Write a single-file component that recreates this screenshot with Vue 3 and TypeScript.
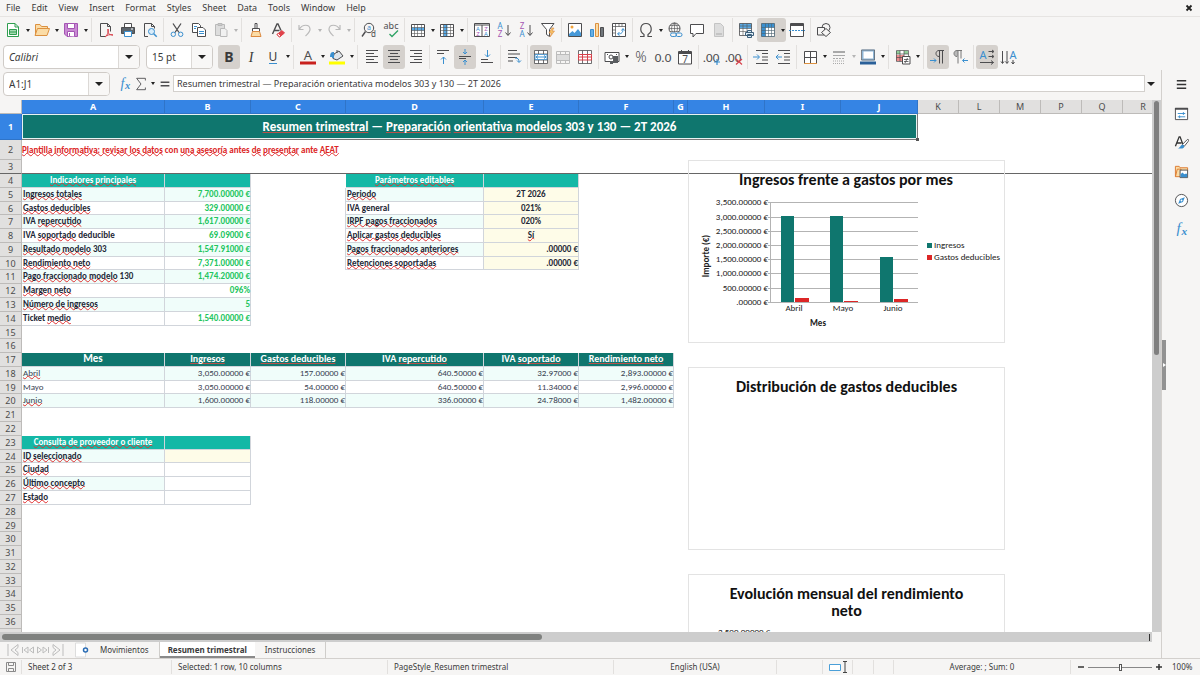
<script setup lang="ts">
import { ref } from 'vue'

type Tool = { id: string; label: string; menu?: boolean; on?: boolean; off?: boolean }
type Cell = { text?: string; cls?: string }
type Row = { n: number; size: string; cells: Cell[] }

const menus = ['File', 'Edit', 'View', 'Insert', 'Format', 'Styles', 'Sheet', 'Data', 'Tools', 'Window', 'Help']

const ink = '#4d4d4f'
const blue = '#3a8fcf'
const lines = (ys: number[], x1: number, x2: number, c = ink) =>
  ys.map((y) => `<path d="M${x1} ${y}H${x2}" stroke="${c}"/>`).join('')
const glyph = (t: string, x: number, y: number, s: number, c: string, extra = '') =>
  `<text x="${x}" y="${y}" font-size="${s}" fill="${c}" stroke="none" text-anchor="middle" ${extra}>${t}</text>`
const grid = (accent: string) =>
  `<path d="M1.500 2.500h13v12h-13z" fill="#fff"/><path d="${accent}" fill="#58aae6"/><path d="M1.500 5.500h13M1.500 8.500h13M1.500 11.500h13M4.500 2.500v12M7.500 2.500v12M11.500 2.500v12" stroke="#555" stroke-width=".6"/><path d="M1.500 2.500h13v12h-13z" stroke="${ink}"/>`

const icons: Record<string, string> = {
  new: `<path d="M2.500 1.500h7.500l3.500 3.500v9.500h-11z" fill="#fff" stroke="#2f9e4f"/><path d="M10 1.500v3.500h3.500" stroke="#2f9e4f"/><path d="M4.500 7.500h7v5h-7z" fill="#a5dbb3" stroke="#2f9e4f"/><path d="M4.500 10h7" stroke="#2f9e4f"/>`,
  open: `<path d="M1.500 13.500v-11h4.500l1.500 2h6v2" fill="#fbdca6" stroke="#dc9140"/><path d="M1 13.500l2.500-7h12l-2.500 7z" fill="#fbdca6" stroke="#dc9140"/>`,
  save: `<path d="M1.500 1.500h13v13h-10.500l-2.500-2.500z" fill="#c98ad3" stroke="#a455b3"/><path d="M4.500 1.500h7v5h-7z" fill="#fff" stroke="#a455b3"/><path d="M4.500 14v-4.500h7v5" fill="#fff" stroke="#a455b3"/><path d="M6.500 11v3" stroke="#a455b3"/>`,
  pdf: `<path d="M2.500 1.500h7l3 3v5M7 14.500h-4.500v-13M9.500 1.500v3h3" stroke="${ink}"/><path d="M7 15c3-3 4-5 3-8-1 4 1 6 5 6-3-1-6 0-8 2z" stroke="#d8404a"/>`,
  print: `<path d="M4.500 5v-3.500h7v3.500" fill="#fff" stroke="${ink}"/><path d="M1.500 5.500h13v6h-13z" fill="#5c646b" stroke="${ink}"/><path d="M4.500 9.500h7v5h-7z" fill="#fff" stroke="${blue}"/><path d="M11 7h2" stroke="#fff"/>`,
  preview: `<path d="M6 14.500h-3.500v-13h7l3 3v2M9.500 1.500v3h3" stroke="${ink}"/><circle cx="9.500" cy="9.500" r="3" fill="#d9ecfa" stroke="${blue}"/><path d="M11.700 11.700l3 3" stroke="${blue}" stroke-width="1.500"/>`,
  cut: `<path d="M4 1.500l6 9M12 1.500l-6 9" stroke="${ink}" stroke-width="1.300"/><circle cx="4.300" cy="12.300" r="2.200" stroke="${blue}"/><circle cx="11.700" cy="12.300" r="2.200" stroke="${blue}"/>`,
  copy: `<path d="M1.500 1.500h6l2 2v7h-8z" fill="#fff" stroke="${ink}"/><path d="M6.500 5.500h5.500l2.500 2.500v6.500h-8z" fill="#fff" stroke="${ink}"/><path d="M3 4.500h3M3 6.500h2" stroke="${blue}"/><path d="M8 9.500h5M8 11.500h5" stroke="${blue}"/>`,
  paste: `<path d="M2.500 2.500h9v11h-9z" fill="#ddd" stroke="#b9b9b9"/><path d="M5 1.500h4v2h-4z" fill="#ccc" stroke="#b9b9b9"/><path d="M7.500 6.500h4.500l2 2v6h-6.500z" fill="#f1f1f1" stroke="#b9b9b9"/>`,
  clone: `<path d="M7 1.500h2v5h-2z" fill="#fff" stroke="${ink}"/><path d="M4.500 6.500h7v3h-7z" fill="#fff" stroke="${ink}"/><path d="M4.500 9.500l-1.500 5h10l-1.500-5z" fill="#fbdca6" stroke="#dc8a40"/>`,
  clear: `<path d="M2.500 12l4.500-10h1l3 6.500M4.500 8.500h5" stroke="${ink}" stroke-width="1.400"/><path d="M7 12.500l5-4 2.500 2.500-5 4z" fill="#e0434b" stroke="#e0434b"/><path d="M7 12.500l1.500-1 2.500 2.500-1.500 1z" fill="#fff" stroke="#e0434b"/>`,
  undo: `<path d="M2 3v4.500h4.500M2.500 7c3-5 10-5 10.500 0 .2 3-2.500 5-4.500 7" stroke="#b9b9b9" stroke-width="1.200"/>`,
  redo: `<path d="M14 3v4.500h-4.500M13.500 7c-3-5-10-5-10.500 0-.2 3 2.500 5 4.500 7" stroke="#b9b9b9" stroke-width="1.200"/>`,
  find: `<circle cx="8" cy="6" r="4.700" stroke="${ink}"/><path d="M4.500 9.500l-3.500 5" stroke="${ink}" stroke-width="1.400"/>${glyph('a', 8, 8, 7, blue)}${glyph('d', 12.5, 15, 8, ink)}`,
  spell: `${glyph('abc', 8, 7, 9, ink)}<path d="M6.500 12l2.500 2.500 6-6" stroke="#32a467" stroke-width="1.400"/>`,
  row: grid('M1.500 5.500h13v3h-13z'),
  col: grid('M4.500 2.500h4v12h-4z'),
  sort: `<path d="M.500 1.500h15v13h-15z" fill="#fff"/><path d="M.500 1.500h15v13h-15zM.500 3h15M8 3v11.500" stroke="${ink}"/>${glyph('A', 4, 8.500, 6, blue)}${glyph('Z', 4, 14, 6, '#a455b3')}${glyph('Z', 12, 8.500, 6, '#a455b3')}${glyph('A', 12, 14, 6, blue)}`,
  asc: `${glyph('A', 4, 7, 8, blue)}${glyph('Z', 4, 15, 8, '#a455b3')}<path d="M12 3v10M9.500 10.500l2.500 3 2.500-3" stroke="${ink}"/>`,
  desc: `${glyph('Z', 4, 7, 8, '#a455b3')}${glyph('A', 4, 15, 8, blue)}<path d="M12 3v10M9.500 10.500l2.500 3 2.500-3" stroke="${ink}"/>`,
  filter: `<path d="M1.500 1.500h12.500l-4.500 6v7l-3-2v-5z" fill="#fff" stroke="${ink}"/><path d="M12 6l-3 5h2.500l-1.500 4 4.500-6h-2.500l2-3z" fill="#f6c469" stroke="#dc8a40" stroke-width=".6"/>`,
  image: `<path d="M1.500 1.500h13v13h-13z" fill="#fff" stroke="${ink}"/><circle cx="5" cy="5" r="1.500" fill="#f1a33c"/><path d="M2 14v-2l3.500-3 2 2 3.500-4 3 4v3z" fill="#4799d8"/>`,
  chart: `<path d="M1.500 7.500h3v7h-3z" fill="#67b0e6" stroke="${blue}"/><path d="M6.500 1.500h3v13h-3z" fill="#fbdca6" stroke="#dc9140"/><path d="M11.500 5.500h3v9h-3z" fill="#70767b" stroke="${ink}"/>`,
  pivot: `<path d="M1.500 1.500h13v13h-13z" fill="#fff" stroke="${ink}"/><path d="M2 4.500h12M4.500 2v12" stroke="${ink}" stroke-width=".7"/><path d="M8 1.500v3M11 1.500v3M1.500 8h3M1.500 11h3" stroke="${ink}" stroke-width=".7"/><path d="M7 12c4 0 5-2 5-5M10.500 8.500l1.500-2 1.500 2M8.500 10l-2 2 2 1.500" stroke="${blue}"/>`,
  omega: `<path d="M2 14.500h4v-2c-5-3-4-11 2-11s7 8 2 11v2h4" stroke="${ink}" stroke-width="1.200"/>`,
  link: `<circle cx="7.500" cy="6.500" r="5.500" stroke="${ink}"/><path d="M2 6.500h11M7.500 1v11M3 3.500h9M3 9.500h9M7.500 1c-4 3-4 8 0 11M7.500 1c4 3 4 8 0 11" stroke="${ink}" stroke-width=".6"/><path d="M3 10.500h13v5h-13z" fill="#f6f5f4"/><rect x="3.500" y="11" width="6" height="3.500" rx="1.700" stroke="${blue}"/><rect x="9" y="11" width="6" height="3.500" rx="1.700" stroke="${blue}"/>`,
  comment: `<path d="M1.500 2.500h13v9h-7.500l-3 3.500v-3.500h-2.500z" fill="#fff" stroke="${ink}"/>`,
  headfoot: `<path d="M3.500 1.500h6l3 3v10h-9z" fill="#ddd" stroke="#c4c4c4"/><path d="M5 11h6v2h-6z" fill="#c4c4c4"/>`,
  area: `<path d="M1.500 1.500h12v12h-12z" fill="#fff"/><path d="M1.500 1.500h12v5h-12z" fill="#58aae6"/><path d="M1.500 4h12M1.500 6.500h12M1.500 9.500h12M5 1.500v12M9 1.500v12" stroke="#555" stroke-width=".6"/><path d="M1.500 1.500h12v12h-12z" stroke="${ink}" stroke-width=".8"/><path d="M7.500 10.500h8v3h-8zM9.500 12.500h4v3h-4zM9.500 10.500v-2h4v2" fill="#dcecf7" stroke="#3c5f7a"/>`,
  freeze: `<path d="M1.500 1.500h13v13h-13z" fill="#fff"/><path d="M1.500 1.500h13v4h-13zM1.500 1.500h4v13h-4z" fill="#3a8fcf"/><path d="M1.500 5.500h13M1.500 8.500h13M1.500 11.500h13M5.500 1.500v13M8.500 1.500v13M11.500 1.500v13" stroke="#48606f" stroke-width=".6"/><path d="M1.500 1.500h13v13h-13z" stroke="#48606f" stroke-width=".8"/>`,
  split: `<path d="M1.500 1.500h13v13h-13z" fill="#fff" stroke="${ink}"/><path d="M1.500 3h13" stroke="${ink}" stroke-width="2"/><path d="M0 8.500h16" stroke="${blue}" stroke-dasharray="2 1"/>`,
  shapes: `<circle cx="10" cy="5.500" r="4" stroke="${ink}"/><path d="M1.500 5.500h7v7.500h-7z" fill="#f6f5f4" stroke="${ink}"/><path d="M10 6.500l4.500 4-4.500 4-4.500-4z" fill="#f6f5f4" stroke="${ink}"/>`,
  bold: glyph('B', 8, 13, 14, '#3a3a3a', 'font-weight="700"'),
  italic: glyph('I', 8, 13, 14, '#3a3a3a', 'font-style="italic" font-family="Liberation Serif"'),
  underline: `${glyph('U', 8, 12, 12, '#3a3a3a')}<path d="M4 14.500h8" stroke="${blue}"/>`,
  fontcolor: `${glyph('A', 8, 11, 13, ink)}<path d="M0 12.500h16v3h-16z" fill="#c9211e"/>`,
  fill: `<path d="M5 5l5-3 4 5-6 4-4-1.500z" fill="#dfe5ea" stroke="${ink}"/><path d="M4 9v-5c-2 0-2 2-2 4" stroke="${blue}" stroke-width="2"/><path d="M8 4v-3" stroke="${ink}"/><path d="M0 12.500h16v3h-16z" fill="#ffff00"/>`,
  left: lines([1.5, 7.5, 13.5], 2, 14) + lines([4.5, 10.5], 2, 10),
  center: lines([1.5, 7.5, 13.5], 2, 14) + lines([4.5, 10.5], 4, 12),
  right: lines([1.5, 7.5, 13.5], 2, 14) + lines([4.5, 10.5], 6, 14),
  top: lines([1.5], 2, 14) + lines([4.5], 2, 9) + `<path d="M8.500 15v-7M6 10.500l2.500-2.500 2.500 2.500" stroke="${blue}"/>`,
  middle: lines([7.5], 2, 14) + lines([9.5], 2, 9) + `<path d="M8 0v5M6 3l2 2 2-2M8 16v-5M6 13l2-2 2 2" stroke="${blue}"/>`,
  bottom: lines([13.5], 2, 14) + lines([10.5], 2, 9) + `<path d="M8.500 1v7M6 5.500l2.500 2.500 2.500-2.500" stroke="${blue}"/>`,
  wrap: lines([1.5, 8.5], 2, 11) + lines([5], 2, 14) + lines([12], 2, 7) + `<path d="M9 9c3 0 4 1 4 4M11 11.500l2 2 2-2" stroke="${blue}"/>`,
  merge: `<path d="M1.500 1.500h13v13h-13z" fill="#fff"/><path d="M1.500 1.500h13v13h-13zM1.500 5h13M1.500 11h13M5.500 1.500v3.500M10.500 1.500v3.500M5.500 11v3.500M10.500 11v3.500" stroke="${ink}" stroke-width=".8"/><path d="M2 5.500h12v5h-12z" fill="#fff" stroke="${blue}" stroke-width=".8"/><path d="M3 8h10M5 6.500l-2 1.500 2 1.500M11 6.500l2 1.500-2 1.500" stroke="${blue}"/>`,
  mergeoff: `<path d="M1.500 2.500h13v12h-13zM1.500 5.500h13M1.500 11.500h13M5.500 2.500v12M10.500 2.500v12" stroke="#bcbcbc"/><path d="M2 6h12v5h-12z" fill="#ddd"/>`,
  unmerge: `<path d="M1.500 1.500h13v13h-13z" fill="#fff"/><path d="M1.500 1.500h13v13h-13zM5.500 1.500v3.500M10.500 1.500v3.500M5.500 11v3.500M10.500 11v3.500" stroke="${ink}" stroke-width=".8"/><path d="M1.500 5.500h13v5.500h-13zM5.500 5v6M10.500 5v6M1.500 8h13" fill="#fff" stroke="#d8404a"/>`,
  currency: `<path d="M1 3.500h14v9h-14z" fill="#fff" stroke="${ink}"/><circle cx="7" cy="8" r="2" stroke="${ink}"/><path d="M9 7h5v7h-5zM6 12h3v3h-3z" fill="#5a5d60"/><path d="M3 5.500h1M12 5.500h1" stroke="${ink}"/>`,
  percent: glyph('%', 8, 13, 14, ink, 'font-weight="300"'),
  number: glyph('0.0', 8, 13, 13, ink, 'font-family="Carlito, Lato"'),
  date: `<path d="M1.500 2.500h13v12.500h-13z" fill="#fff" stroke="${ink}"/><path d="M1.500 4h13" stroke="${ink}" stroke-width="2"/><path d="M4.500 1v2M11.500 1v2" stroke="${ink}"/>${glyph('7', 8, 13.5, 10, ink)}`,
  adddec: `${glyph('.00', 7, 13, 13, ink, 'font-family="Carlito, Lato"')}<path d="M13 10v6M10 13h6" stroke="${blue}" stroke-width="1.200"/>`,
  deldec: `${glyph('.00', 7, 13, 13, ink, 'font-family="Carlito, Lato"')}<path d="M10 10l6 5.500M16 10l-6 5.500" stroke="#d8404a" stroke-width="1.200"/>`,
  indent: lines([1.5, 14.5], 3, 15) + lines([4.5, 8, 11], 9, 15) + `<path d="M0 8h6M4 5.500l2.500 2.500-2.500 2.500" stroke="${blue}"/>`,
  outdent: lines([1.5, 14.5], 3, 15) + lines([4.5, 8, 11], 9, 15) + `<path d="M1 8h6M3.500 5.500l-2.500 2.500 2.500 2.500" stroke="${blue}"/>`,
  border: `<path d="M2.500 2.500h12v12h-12zM8.500 2.500v12M2.500 8.500h12" fill="#fff" stroke="${ink}"/><path d="M2 14.500h13" stroke="#dc9140"/>`,
  linestyle: `<path d="M2 3h12" stroke="#a9a9a9" stroke-width="2"/><path d="M2 6.500h12" stroke="#a9a9a9"/><path d="M2 9.500h12" stroke="#a9a9a9" stroke-dasharray="2 1"/><path d="M2 12h12M2 14.500h12" stroke="#a9a9a9" stroke-dasharray="1 1"/>`,
  linecolor: `<path d="M2.500 1.500h11.500v9h-11.500z" fill="#fff" stroke="#8fb6d6" stroke-width="2"/><path d="M1.500 1h13v10h-13z" stroke="${ink}" stroke-width=".6"/><path d="M0 12.500h16v3h-16z" fill="#2a6099"/>`,
  cond: `<path d="M1.500 1.500h12v11h-12z" fill="#fff"/><path d="M1 2h4v3h-4zM9 2h4v3h-4z" fill="#91cf9b"/><path d="M1 6h8v6h-8z" fill="#ed8d8f"/><path d="M1.500 1.500h12v11h-12zM1.500 5h12M1.500 8.500h12M5 1.500v11M9 1.500v11" stroke="${ink}" stroke-width=".7"/><path d="M7.500 7.500h7.500v7.500h-7.500z" fill="#fff" stroke="${ink}"/><path d="M9 10.500h4.500M9 12.500h4.500M12.500 9l-2.500 5" stroke="${ink}" stroke-width=".8"/>`,
  ltr: `<path d="M14 1.500h-5c-4 0-4 6 0 6M9.500 1.500v13M12.500 1.500v13" stroke="${ink}"/><path d="M0 11.500h6M4 9.500l2 2-2 2" stroke="${blue}"/>`,
  rtl: `<path d="M6 1.500h-1c-4 0-4 6 0 6h1z" fill="#b8b8b8"/><path d="M10 1.500h-5c-4 0-4 6 0 6M6 1.500v13M9 1.500v8" stroke="#777"/><path d="M16 11.500h-5M12.500 9.500l-2 2 2 2" stroke="${blue}"/>`,
  horiz: `${glyph('A', 4, 10, 11, blue)}<path d="M9.500 2.500h5M9.500 7.500h5M1 13.500h13.500M13 1l2 1.500-2 1.500M13 6l2 1.500-2 1.500M12 11.500l2.500 2-2.500 2" stroke="${ink}"/>`,
  vert: `${glyph('A', 12, 10, 11, blue)}<path d="M1.500 2v12M6 2v12M12 11v4M0 12.500l1.500 2 1.500-2M4.500 12.500l1.500 2 1.500-2M10.500 13l1.500 2 1.500-2" stroke="${ink}"/>`,
  fx: `${glyph('f', 5, 12, 16, blue, 'font-style="italic" font-family="Liberation Serif"')}${glyph('x', 11, 14, 12, blue, 'font-style="italic" font-weight="700" font-family="Liberation Serif"')}`,
  sum: `<path d="M13 4v-2.500h-10l5 6.500-5 6.500h10v-2.500" stroke="${ink}"/>`,
  equals: `<path d="M3 6h10M3 10h10" stroke="${ink}" stroke-width="1.500"/>`,
  menu: `<path d="M3 4h10M3 8h10M3 12h10" stroke="#333" stroke-width="1.400"/>`,
  props: `<path d="M1.500 2.500h13v12h-13z" fill="#fff" stroke="${ink}"/><path d="M1 3h14" stroke="${ink}" stroke-width="2"/><path d="M4 8h8M4 11.500h8M10 6.500v3M6 10v3" stroke="${blue}"/>`,
  styles: `<path d="M1.500 12l4-10h1l3 8M3 8.500h5" stroke="#333" stroke-width="1.400"/><path d="M9 10l5-5c1.500-1 2 .500 1 2l-4 5z" fill="#fff" stroke="${ink}"/><path d="M4 14.500c2 0 3-4 5-4s3 3 0 4z" fill="#3a8fcf"/>`,
  gallery: `<path d="M1.500 13.500v-11h4l1 1.500h8v3" fill="#fbdca6" stroke="#dc7a30"/><path d="M1.500 13.500l2-8h4v8z" fill="#fbdca6" stroke="#dc7a30"/><path d="M6.500 6.500h8v8h-8z" fill="#fff" stroke="${ink}"/><path d="M7 14v-3l2-2 2 2 2-1 1 1v3z" fill="#3a8fcf"/>`,
  nav: `<circle cx="8" cy="8" r="6.500" fill="#fff" stroke="${ink}"/><path d="M11.500 4.500l-2 5-5 2 2-5z" fill="#3a8fcf"/><circle cx="8" cy="8" r="1" fill="#fff"/>`,
}

const standard: Tool[][] = [
  [{ id: 'new', label: 'New', menu: true }, { id: 'open', label: 'Open', menu: true }, { id: 'save', label: 'Save', menu: true }],
  [{ id: 'pdf', label: 'Export PDF' }, { id: 'print', label: 'Print' }, { id: 'preview', label: 'Print preview' }],
  [{ id: 'cut', label: 'Cut' }, { id: 'copy', label: 'Copy' }, { id: 'paste', label: 'Paste', menu: true, off: true }],
  [{ id: 'clone', label: 'Clone formatting' }, { id: 'clear', label: 'Clear formatting' }],
  [{ id: 'undo', label: 'Undo', menu: true, off: true }, { id: 'redo', label: 'Redo', menu: true, off: true }],
  [{ id: 'find', label: 'Find and replace' }, { id: 'spell', label: 'Spelling' }],
  [{ id: 'row', label: 'Row', menu: true }, { id: 'col', label: 'Column', menu: true }],
  [{ id: 'sort', label: 'Sort' }, { id: 'asc', label: 'Sort ascending' }, { id: 'desc', label: 'Sort descending' }, { id: 'filter', label: 'AutoFilter' }],
  [{ id: 'image', label: 'Insert image' }, { id: 'chart', label: 'Insert chart' }, { id: 'pivot', label: 'Pivot table' }],
  [{ id: 'omega', label: 'Special character', menu: true }, { id: 'link', label: 'Hyperlink' }, { id: 'comment', label: 'Comment' }, { id: 'headfoot', label: 'Headers and footers' }],
  [{ id: 'area', label: 'Print area' }, { id: 'freeze', label: 'Freeze rows and columns', menu: true, on: true }, { id: 'split', label: 'Split window' }],
  [{ id: 'shapes', label: 'Draw functions' }],
]
const formatting: Tool[][] = [
  [{ id: 'bold', label: 'Bold', on: true }, { id: 'italic', label: 'Italic' }, { id: 'underline', label: 'Underline', menu: true }],
  [{ id: 'fontcolor', label: 'Font color', menu: true }, { id: 'fill', label: 'Background color', menu: true }],
  [{ id: 'left', label: 'Align left' }, { id: 'center', label: 'Align center', on: true }, { id: 'right', label: 'Align right' }],
  [{ id: 'top', label: 'Align top' }, { id: 'middle', label: 'Center vertically', on: true }, { id: 'bottom', label: 'Align bottom' }],
  [{ id: 'wrap', label: 'Wrap text' }],
  [{ id: 'merge', label: 'Merge and center', on: true }, { id: 'mergeoff', label: 'Merge cells', off: true }, { id: 'unmerge', label: 'Unmerge cells' }],
  [{ id: 'currency', label: 'Currency', menu: true }, { id: 'percent', label: 'Percent' }, { id: 'number', label: 'Number' }, { id: 'date', label: 'Date' }],
  [{ id: 'adddec', label: 'Add decimal' }, { id: 'deldec', label: 'Delete decimal' }],
  [{ id: 'indent', label: 'Increase indent' }, { id: 'outdent', label: 'Decrease indent' }],
  [{ id: 'border', label: 'Borders', menu: true }, { id: 'linestyle', label: 'Border style', menu: true, off: true }, { id: 'linecolor', label: 'Border color', menu: true }],
  [{ id: 'cond', label: 'Conditional', menu: true }],
  [{ id: 'ltr', label: 'Left to right', on: true }, { id: 'rtl', label: 'Right to left' }],
  [{ id: 'horiz', label: 'Text direction horizontal', on: true }, { id: 'vert', label: 'Text direction vertical' }],
]
// A group that follows a drop-down arrow gets a slightly wider gap.
const isWide = (bar: Tool[][], g: number) => g > 0 && !!bar[g - 1][bar[g - 1].length - 1].menu

const columns = ['A', 'B', 'C', 'D', 'E', 'F', 'G', 'H', 'I', 'J', 'K', 'L', 'M', 'P', 'Q', 'R']

// Words wrapped in ~ are flagged by the spell checker.
const parts = (text = '') => text.split('~').map((t, i) => ({ t, bad: i % 2 === 1 }))
const titleText = '~Resumen trimestral~ — ~Preparación~ ~orientativa~ ~modelos~ 303 y 130 — 2T 2026'
const noticeText = '~Plantilla informativa: revisar los datos~ con ~una asesoría~ antes ~de~ ~presentar~ ante ~AEAT~'

const kpis = [
  ['~Ingresos totales~', '7,700.00000 €'], ['~Gastos deducibles~', '329.00000 €'], ['IVA ~repercutido~', '1,617.00000 €'],
  ['IVA ~soportado~ deducible', '69.09000 €'], ['~Resultado modelo~ 303', '1,547.91000 €'], ['~Rendimiento neto~', '7,371.00000 €'],
  ['~Pago fraccionado modelo~ 130', '1,474.20000 €'], ['~Margen neto~', '096%'], ['~Número de ingresos~', '5'], ['Ticket ~medio~', '1,540.00000 €'],
]
const params = [
  ['~Periodo~', '2T 2026', 'mid'], ['IVA general', '021%', 'mid'], ['~IRPF pagos fraccionados~', '020%', 'mid'],
  ['~Aplicar gastos deducibles~', '~Sí~', 'mid'], ['~Pagos fraccionados anteriores~', '.00000 €', 'num'], ['~Retenciones soportadas~', '.00000 €', 'num'],
]
const months = [
  ['~Abril~', '3,050.00000 €', '157.00000 €', '640.50000 €', '32.97000 €', '2,893.00000 €'],
  ['Mayo', '3,050.00000 €', '54.00000 €', '640.50000 €', '11.34000 €', '2,996.00000 €'],
  ['~Junio~', '1,600.00000 €', '118.00000 €', '336.00000 €', '24.78000 €', '1,482.00000 €'],
]
const lookup = ['~ID seleccionado~', '~Ciudad~', '~Último concepto~', '~Estado~']

function cellsFor(n: number): Cell[] {
  const out: Cell[] = Array.from({ length: 6 }, () => ({}))
  if (n === 4) {
    out[0] = { text: '~Indicadores principales~', cls: 'box head light' }
    out[1] = { cls: 'box light' }
    out[3] = { text: '~Parámetros editables~', cls: 'box head light' }
    out[4] = { cls: 'box light' }
  }
  const tint = n % 2 ? ' tint' : ''
  if (n >= 5 && n <= 14) {
    out[0] = { text: kpis[n - 5][0], cls: 'box strong' + tint }
    out[1] = { text: kpis[n - 5][1], cls: 'box strong num green' + tint }
  }
  if (n >= 5 && n <= 10) {
    out[2] = { cls: 'edge' }
    out[3] = { text: params[n - 5][0], cls: 'box strong' + tint }
    out[4] = { text: params[n - 5][1], cls: 'box strong cream ' + params[n - 5][2] }
  }
  if (n === 17) {
    const heads = ['Mes', '~Ingresos~', '~Gastos deducibles~', 'IVA ~repercutido~', 'IVA ~soportado~', '~Rendimiento neto~']
    return heads.map((text, i) => ({ text, cls: 'box head dark' + (i ? '' : ' big') }))
  }
  if (n >= 18 && n <= 20) {
    return months[n - 18].map((text, i) => ({ text, cls: 'box plain' + (i ? ' num' : '') + (n % 2 ? '' : ' tint') }))
  }
  if (n === 23) {
    out[0] = { text: '~Consulta de proveedor o cliente~', cls: 'box head light' }
    out[1] = { cls: 'box light' }
  }
  if (n >= 24 && n <= 27) {
    out[0] = { text: lookup[n - 24], cls: 'box strong' + (n % 2 ? '' : ' tint') }
    out[1] = { cls: 'box' + (n === 24 ? ' cream' : '') }
  }
  return out
}

const rows: Row[] = Array.from({ length: 36 }, (_, i) => {
  const n = i + 2
  const k = n - 4
  const short = k >= 0 && Math.round((k + 1) * 13.78) - Math.round(k * 13.78) === 13
  return { n, size: n === 2 ? 'medium' : n === 3 ? 'frozen' : short ? 'short' : 'normal', cells: cellsFor(n) }
})

const ticks = ['3,500.00000 €', '3,000.00000 €', '2,500.00000 €', '2,000.00000 €', '1,500.00000 €', '1,000.00000 €', '500.00000 €', '.00000 €']
const tickY = [42, 57, 71, 85, 99, 113, 128, 142]
const bars = [
  { name: 'Abril', x: 93, income: 86, cost: 4 },
  { name: 'Mayo', x: 142, income: 86, cost: 1 },
  { name: 'Junio', x: 192, income: 45, cost: 3 },
]

const sheets = ['Movimientos', 'Resumen trimestral', 'Instrucciones']
const active = ref('Resumen trimestral')
const zoom = ref(50)
const fontName = ref('Calibri')
const fontSize = ref('15 pt')
const range = ref('A1:J1')
const formula = ref('Resumen trimestral — Preparación orientativa modelos 303 y 130 — 2T 2026')
const sidebar = [
  { id: 'menu', label: 'Sidebar settings' }, { id: 'props', label: 'Properties' }, { id: 'styles', label: 'Styles' },
  { id: 'gallery', label: 'Gallery' }, { id: 'nav', label: 'Navigator' }, { id: 'fx', label: 'Functions' },
]
</script>

<template>
  <div class="app">
    <nav class="menubar">
      <button v-for="m in menus" :key="m" type="button">{{ m }}</button>
      <button type="button" class="close" aria-label="Close document">
        <svg viewBox="0 0 8 8" width="8" height="8"><path d="M1.500 1.500l5 5M6.500 1.500l-5 5" stroke="#222" stroke-width="1.800" /></svg>
      </button>
    </nav>

    <div class="toolbar upper" role="toolbar" aria-label="Standard">
      <div v-for="(group, g) in standard" :key="g" class="group" :class="{ wide: isWide(standard, g) }">
        <div v-for="t in group" :key="t.id" class="tool" :class="{ on: t.on, off: t.off }">
          <button type="button" class="icon" :aria-label="t.label"><svg viewBox="0 0 16 16" v-html="icons[t.id]" /></button>
          <button v-if="t.menu" type="button" class="drop" :aria-label="t.label + ' options'"><i class="caret" /></button>
        </div>
      </div>
    </div>

    <div class="toolbar" role="toolbar" aria-label="Formatting">
      <div class="combo font">
        <input v-model="fontName" aria-label="Font name" class="slanted" />
        <button type="button" aria-label="Choose font"><i class="caret large" /></button>
      </div>
      <div class="combo size">
        <input v-model="fontSize" aria-label="Font size" />
        <button type="button" aria-label="Choose size"><i class="caret large" /></button>
      </div>
      <div v-for="(group, g) in formatting" :key="g" class="group" :class="{ wide: isWide(formatting, g) }">
        <div v-for="t in group" :key="t.id" class="tool" :class="{ on: t.on, off: t.off }">
          <button type="button" class="icon" :aria-label="t.label"><svg viewBox="0 0 16 16" v-html="icons[t.id]" /></button>
          <button v-if="t.menu" type="button" class="drop" :aria-label="t.label + ' options'"><i class="caret" /></button>
        </div>
      </div>
    </div>

    <div class="body">
      <main class="work">
        <div class="formulabar">
          <div class="combo name">
            <input v-model="range" aria-label="Name box" />
            <button type="button" aria-label="Named ranges"><i class="caret large" /></button>
          </div>
          <button type="button" class="small" aria-label="Function wizard"><svg viewBox="0 0 16 16" v-html="icons.fx" /></button>
          <button type="button" class="small" aria-label="Select function"><svg viewBox="0 0 16 16" v-html="icons.sum" /></button>
          <button type="button" class="drop" aria-label="Function list"><i class="caret" /></button>
          <button type="button" class="small" aria-label="Formula"><svg viewBox="0 0 16 16" v-html="icons.equals" /></button>
          <input v-model="formula" class="formula" aria-label="Input line" />
          <button type="button" class="expand" aria-label="Expand formula bar"><i class="caret large" /></button>
        </div>

        <div class="viewport">
          <div class="sheet">
            <table>
              <colgroup>
                <col class="w-head" />
                <col v-for="c in columns" :key="c" :class="'w-' + c" />
              </colgroup>
              <thead>
                <tr>
                  <th class="corner"></th>
                  <th v-for="(c, i) in columns" :key="c" scope="col" :class="{ sel: i < 10 }">{{ c }}</th>
                </tr>
              </thead>
              <tbody>
                <tr class="tall">
                  <th scope="row" class="sel">1</th>
                  <td colspan="10" class="title">
                    <span v-for="(p, i) in parts(titleText)" :key="i" :class="{ bad: p.bad }">{{ p.t }}</span>
                    <i class="handle" />
                  </td>
                  <td colspan="6"></td>
                </tr>
                <tr v-for="r in rows" :key="r.n" :class="r.size">
                  <th scope="row">{{ r.n }}</th>
                  <td v-if="r.n === 2" colspan="16" class="notice"><span v-for="(p, i) in parts(noticeText)" :key="i" :class="{ bad: p.bad }">{{ p.t }}</span></td>
                  <template v-else>
                    <td v-for="(c, i) in r.cells" :key="i" :class="c.cls"><span v-for="(p, j) in parts(c.text)" :key="j" :class="{ bad: p.bad }">{{ p.t }}</span></td>
                    <td colspan="10"></td>
                  </template>
                </tr>
              </tbody>
            </table>

            <figure class="chart first">
              <svg viewBox="0 0 316 182" width="316" height="182" role="img" aria-label="Ingresos frente a gastos por mes">
                <text class="ctitle" x="158" y="25" text-anchor="middle">Ingresos frente a gastos por mes</text>
                <g v-for="(t, i) in ticks" :key="t">
                  <path :d="`M80 ${tickY[i]}.5H230`" stroke="#b3b3b3" />
                  <text x="80" :y="tickY[i] + 3" text-anchor="end">{{ t }}</text>
                </g>
                <path d="M82.500 42V142" stroke="#b3b3b3" />
                <g v-for="b in bars" :key="b.name">
                  <rect :x="b.x" :y="142 - b.income" width="13" :height="b.income" fill="#0f766e" />
                  <rect :x="b.x + 14" :y="142 - b.cost" width="14" :height="b.cost" fill="#dc2626" />
                  <text :x="b.x + 13" y="151" text-anchor="middle">{{ b.name }}</text>
                </g>
                <text class="axis" x="130" y="166" text-anchor="middle">Mes</text>
                <text class="axis" transform="translate(21 96) rotate(-90)" text-anchor="middle">Importe (€)</text>
                <rect x="239" y="83" width="5" height="5" fill="#0f766e" />
                <text x="246" y="88">Ingresos</text>
                <rect x="239" y="95" width="5" height="5" fill="#dc2626" />
                <text x="246" y="100">Gastos deducibles</text>
              </svg>
            </figure>
            <figure class="chart second"><figcaption>Distribución de gastos deducibles</figcaption></figure>
            <figure class="chart third">
              <figcaption>Evolución mensual del rendimiento neto</figcaption>
              <span class="tick">3,500.00000 €</span>
            </figure>
          </div>
          <div class="vscroll"><div class="thumb"></div></div>
        </div>
        <div class="hscroll"><div class="thumb"></div><i class="grip" /></div>

        <div class="tabs">
          <div class="tabnav">
            <button type="button" aria-label="First sheet"><svg viewBox="0 0 14 14"><path d="M2 1v12M12 1.500v3l-3 2.500 3 2.500v3L5 7z" stroke="#bdbdbd" /></svg></button>
            <button type="button" aria-label="Previous sheet"><svg viewBox="0 0 14 14"><path d="M1.500 4v6M7 4v6L3 7zM12.500 4v6L8.500 7z" stroke="#bdbdbd" /></svg></button>
            <button type="button" aria-label="Next sheet"><svg viewBox="0 0 14 14"><path d="M12.500 4v6M7 4v6l4-3zM1.500 4v6l4-3z" stroke="#bdbdbd" /></svg></button>
            <button type="button" aria-label="Last sheet"><svg viewBox="0 0 14 14"><path d="M12 1v12M2 1.500v3L5 7l-3 2.500v3L9 7z" stroke="#bdbdbd" /></svg></button>
          </div>
          <button type="button" class="add" aria-label="Add sheet">
            <svg viewBox="0 0 14 14" width="14" height="14"><path d="M.500 0h10v14h-10z" fill="#fff" stroke="#ddd" /><circle cx="10.500" cy="7" r="2" stroke="#2a6db5" stroke-width="1.500" fill="#fff" /></svg>
          </button>
          <button v-for="s in sheets" :key="s" type="button" class="tab" :class="{ active: s === active }" @click="active = s">{{ s }}</button>
        </div>
      </main>

      <aside class="sidebar">
        <button type="button" class="splitter" aria-label="Hide sidebar"></button>
        <button v-for="s in sidebar" :key="s.id" type="button" class="side" :aria-label="s.label"><svg viewBox="0 0 16 16" v-html="icons[s.id]" /></button>
      </aside>
    </div>

    <footer class="status">
      <span class="mid"><svg viewBox="0 0 12 12" width="12" height="12"><path d="M1.500 1.500h9v9h-9zM3.500 1.500v3h5v-3M3.500 10.500v-3h5v3" fill="none" stroke="#8a8a8a" /></svg></span>
      <span>Sheet 2 of 3</span>
      <span>Selected: 1 row, 10 columns</span>
      <span>PageStyle_Resumen trimestral</span>
      <span class="mid">English (USA)</span>
      <span></span>
      <span class="mid"><svg viewBox="0 0 20 12" width="20" height="12"><path d="M1.500 3.500h11v6h-11z" fill="#fff" stroke="#4a9fd8" /><path d="M15 .500h4M15 11.500h4M17 .500v11" stroke="#444" /></svg></span>
      <span></span>
      <span></span>
      <span class="mid">Average: ; Sum: 0</span>
      <div class="zoom">
        <button type="button" aria-label="Zoom out"><svg viewBox="0 0 8 8"><path d="M1 4h6" stroke="#333" stroke-width="1.500" /></svg></button>
        <input v-model="zoom" type="range" min="0" max="100" aria-label="Zoom" />
        <button type="button" aria-label="Zoom in"><svg viewBox="0 0 8 8"><path d="M1 4h6M4 1v6" stroke="#333" stroke-width="1.500" /></svg></button>
        <span class="pct">100%</span>
      </div>
    </footer>
  </div>
</template>

<style>
body { background: #f6f5f4; }
</style>

<style scoped>
* { box-sizing: border-box; }
.app {
  display: flex; flex-direction: column; height: 100vh; overflow: hidden;
  background: #f6f5f4; color: #3a3a3a; font: 9px/14px "Noto Sans", sans-serif;
}
button { display: flex; align-items: center; justify-content: center; margin: 0; padding: 0; border: 0; background: none; color: inherit; font: inherit; }
input { margin: 0; border: 0; padding: 0; min-width: 0; color: inherit; font: inherit; background: none; outline: none; }
svg { display: block; overflow: visible; fill: none; font-family: "Noto Sans", sans-serif; }

.menubar { display: flex; flex: none; gap: 11px; height: 17px; padding: 0 6px; border-bottom: 1px solid #e6e4e2; }
.menubar .close { margin-left: auto; width: 10px; }

.toolbar { display: flex; flex: none; align-items: center; height: 27px; padding-left: 3px; }
.toolbar.upper { height: 26px; padding-left: 2px; }
.group { display: flex; }
.group + .group { margin-left: 2px; padding-left: 2px; border-left: 1px solid #e2e0de; }
.group.wide { padding-left: 3px; }
.tool { display: flex; height: 24px; border-radius: 3px; }
.tool.on { background: #d5d1cd; }
.icon { width: 22px; }
.icon svg { width: 16px; height: 16px; }
.drop { width: 7px; }
.caret { width: 0; height: 0; border: 2px solid transparent; border-top: 3px solid #222; border-bottom: 0; }
.caret.large { border-width: 4px 4px 0; }
.off .caret { border-top-color: #b5b5b5; }

.combo { display: flex; flex: none; height: 24px; border: 1px solid #cfcbc7; border-radius: 4px; background: #fff; }
.combo input { flex: 1; padding-left: 5px; font-size: 10px; }
.combo button { width: 21px; border-left: 1px solid #dcd9d6; border-radius: 0 3px 3px 0; background: #f8f7f6; }
.combo.font { width: 137px; margin-right: 6px; }
.combo.size { width: 67px; margin-right: 5px; }
.combo.name { width: 107px; }
.slanted { font-style: italic; }

.body { display: flex; flex: 1; min-height: 0; }
.work { display: flex; flex: 1; flex-direction: column; min-width: 0; }
.formulabar { display: flex; flex: none; align-items: center; height: 30px; padding: 0 4px 3px 3px; }
.small { width: 16px; }
.small svg { width: 14px; height: 14px; }
.combo.name + .small { margin-left: 7px; }
.formulabar .drop { width: 8px; }
.formula { flex: 1; height: 17px; padding-left: 3px; border: 1px solid #d3d0cd; background: #fff; }
.expand { width: 12px; }

.viewport { display: flex; flex: 1; min-height: 0; }
.sheet { position: relative; flex: 1; min-width: 0; overflow: hidden; background: #fff; font-family: Carlito, Lato, sans-serif; }
table { table-layout: fixed; width: 1164px; border-collapse: separate; border-spacing: 0; }
.w-head { width: 22px; }
.w-A { width: 143px; }
.w-B { width: 86px; }
.w-C, .w-E, .w-F { width: 95px; }
.w-D { width: 138px; }
.w-G { width: 14px; }
.w-H, .w-J { width: 77px; }
.w-I { width: 76px; }
.w-K, .w-L, .w-M, .w-P, .w-Q, .w-R { width: 41px; }
th, td { height: inherit; padding: 0; white-space: nowrap; line-height: 12px; }
th { border-right: 1px solid #bdbbb9; border-bottom: 1px solid #bdbbb9; background: #e1e0df; color: #4c4c4c; font: 9px/12px "Noto Sans", sans-serif; text-align: center; }
thead tr { height: 14px; }
th.corner { background: #f6f5f4; }
th.sel { border-color: #2f74c8; background: #3584e4; color: #fff; font-weight: 700; }
tr.tall { height: 26px; }
tr.medium { height: 20px; }
tr.normal, tr.frozen { height: 14px; }
tr.short { height: 13px; }
tr.short th { line-height: 11px; }
tr.frozen > * { border-bottom: 1px solid #666; }
td { text-align: left; font-size: 9px; }
td.box { vertical-align: top; line-height: 11px; }
.title { position: relative; border-right: 1px solid #777; border-bottom: 1px solid #777; background: #0f766e; box-shadow: inset 0 0 0 1px #e8f3f2; color: #fff; font-size: 13px; font-weight: 700; text-align: center; line-height: 20px; }
.handle { position: absolute; right: -2px; bottom: -2px; width: 3px; height: 3px; background: #555; }
.notice { color: #dc2626; font-weight: 700; }
.box { padding: 0 1px; border-right: 1px solid #d1d5db; border-bottom: 1px solid #d1d5db; }
.edge { border-right: 1px solid #d1d5db; }
.head { color: #fff; font-weight: 700; text-align: center; }
.light { background: #14b8a6; }
.dark { background: #0f766e; font-size: 10px; }
.big { font-size: 11px; }
.strong { color: #1f2937; font-weight: 700; }
.plain { color: #374151; }
.tint { background: #f0fdfa; }
.cream { background: #fefce8; }
.num { padding-right: 0; text-align: right; }
.mid { text-align: center; }
.green { color: #22c55e; }
.bad { text-decoration: underline wavy #e03030 1px; text-decoration-skip-ink: none; text-underline-offset: -1px; }
.title .bad, .dark .bad { text-decoration: underline solid #b8504a 1px; text-underline-offset: 1px; }

.chart { position: absolute; left: 688px; width: 317px; height: 183px; margin: 0; outline: 1px solid #e3e3e3; outline-offset: -1px; color: #111; text-align: center; }
.chart svg { font-family: Carlito, Lato, sans-serif; font-size: 9px; fill: #222; }
.first { top: 60px; }
.second { top: 267px; }
.third { top: 474px; }
.ctitle, figcaption { font-size: 16px; font-weight: 700; line-height: 17px; fill: #111; }
.axis { font-weight: 700; }
figcaption { padding: 11px 36px 0; }
.tick { display: block; padding: 7px 0 0 30px; font-size: 9px; line-height: 12px; text-align: left; }

.vscroll { flex: none; width: 9px; padding: 1px 2px; background: #cdcdcd; }
.vscroll .thumb { width: 5px; height: 48%; border-radius: 3px; background: #7f7f7f; }
.hscroll { display: flex; flex: none; align-items: center; height: 10px; margin-right: 9px; padding: 0 2px; background: #cdcdcd; }
.hscroll .thumb { width: 47%; height: 6px; border-radius: 3px; background: #7f817f; }
.grip { width: 1px; height: 7px; margin-left: auto; background: #333; }

.tabs { display: flex; flex: none; height: 16px; font-size: 8px; }
.tabnav { display: flex; width: 68px; padding-left: 5px; }
.tabnav button { width: 15px; }
.tabnav svg { width: 14px; height: 14px; }
.add { width: 16px; margin-left: 6px; }
.tab { padding: 0 10px 1px; border-right: 1px solid #cfcdca; }
.tab.active { padding: 1px 8px 0; border-right: 0; border-bottom: 2px solid #8a8a8a; background: #fff; font-weight: 700; }

.sidebar { position: relative; display: flex; flex: none; flex-direction: column; align-items: center; width: 39px; border-left: 1px solid #d3d0cd; }
.side { width: 28px; height: 29px; }
.side svg { width: 15px; height: 15px; }
.splitter { position: absolute; top: 46%; left: 0; width: 4px; height: 50px; background: #929292; }
.splitter::after { content: ""; border: 2px solid transparent; border-left: 3px solid #fff; border-right: 0; }

.status {
  display: grid; flex: none; align-items: center; height: 17px; border-top: 1px solid #d3d0cd; font-size: 8px;
  grid-template-columns: 22px 150fr 216fr 226fr 163fr 46fr 30px 21px 20px 177fr 129px;
}
.status > span { height: 14px; padding-left: 6px; border-right: 1px solid #e2e0de; line-height: 14px; white-space: nowrap; }
.status > .mid { display: flex; align-items: center; justify-content: center; padding: 0; }
.zoom { display: flex; align-items: center; gap: 2px; padding-left: 5px; }
.zoom button { width: 10px; }
.zoom button svg { width: 8px; height: 8px; }
.zoom input { appearance: none; width: 64px; height: 10px; }
.zoom input::-webkit-slider-runnable-track { height: 1px; background: #888; }
.zoom input::-webkit-slider-thumb { appearance: none; width: 3px; height: 7px; margin-top: -3px; border: 1px solid #555; background: #fff; }
.pct { padding-left: 6px; }
</style>
